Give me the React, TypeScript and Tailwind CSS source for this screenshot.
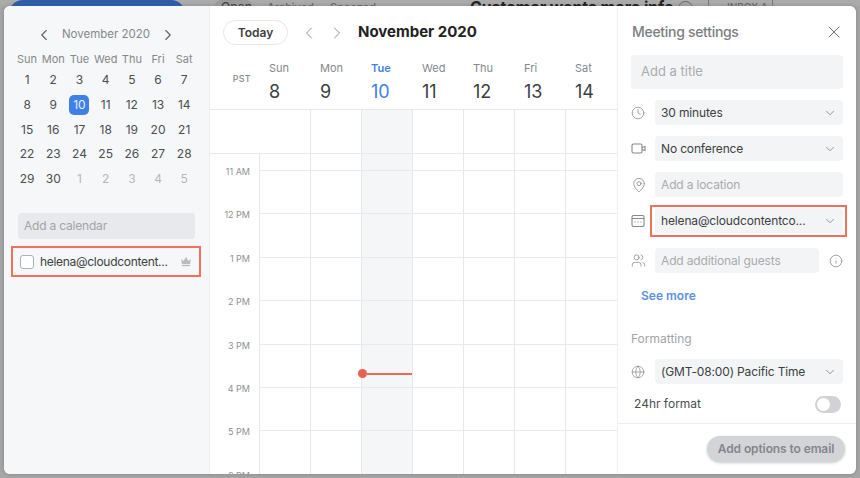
import { ChevronDown, ChevronLeft, ChevronRight, Clock, Globe, Info, MapPin, Users, X } from "lucide-react";
import type { ReactNode } from "react";

const weekDays = ["Sun", "Mon", "Tue", "Wed", "Thu", "Fri", "Sat"];

const miniDays = [
  1, 2, 3, 4, 5, 6, 7, 8, 9, 10, 11, 12, 13, 14, 15, 16, 17, 18, 19, 20, 21, 22, 23, 24, 25, 26, 27, 28, 29, 30, 1, 2, 3,
  4, 5,
];

const columns = [
  { name: "Sun", date: 8 },
  { name: "Mon", date: 9 },
  { name: "Tue", date: 10, today: true },
  { name: "Wed", date: 11 },
  { name: "Thu", date: 12 },
  { name: "Fri", date: 13 },
  { name: "Sat", date: 14 },
];

const hours = ["11 AM", "12 PM", "1 PM", "2 PM", "3 PM", "4 PM", "5 PM", "6 PM"];

function VideoIcon() {
  return (
    <svg width="15" height="15" viewBox="0 0 15 15" fill="none" stroke="#85888c" strokeWidth="1.1">
      <rect x="1" y="3" width="10" height="9" rx="1.5" />
      <path d="M11 6.5l3-1v4l-3-1" />
    </svg>
  );
}

function CalendarIcon() {
  return (
    <svg width="14" height="14" viewBox="0 0 14 14" fill="none" stroke="#85888c" strokeWidth="1.1">
      <rect x="1" y="1.5" width="12" height="11" rx="1.5" />
      <path d="M1 4.5h12" />
      <path d="M3.5 8h1M6.5 8h1M9.5 8h1" />
    </svg>
  );
}

function CrownIcon() {
  return (
    <svg className="shrink-0" width="12" height="11" viewBox="0 0 12 11" fill="#b9bbbf">
      <path d="M1 3l2.6 2L6 1l2.4 4L11 3l-1 5H2z" />
      <rect x="2" y="8.8" width="8" height="1.4" />
    </svg>
  );
}

function Field({ children, chevron, muted }: { children: ReactNode; chevron?: boolean; muted?: boolean }) {
  return (
    <div
      className={`flex h-[25px] flex-1 items-center justify-between rounded bg-[#f3f4f6] pl-[6px] pr-[6px] text-xs tracking-[-0.15px] ${
        muted ? "text-[#a9abae]" : "text-[#3c3f42]"
      }`}
    >
      <span className="whitespace-nowrap">{children}</span>
      {chevron && <ChevronDown size={14} strokeWidth={1.5} color="#85888c" />}
    </div>
  );
}

function SettingRow({ icon, children, className = "" }: { icon: ReactNode; children: ReactNode; className?: string }) {
  return (
    <div className={`flex items-center ${className}`}>
      <div className="flex w-6 justify-start">{icon}</div>
      {children}
    </div>
  );
}

function MiniCalendar() {
  return (
    <div className="pl-[10px] pt-[20px]">
      <div className="flex h-[18px] items-center pl-[21px] text-[#85888c]">
        <ChevronLeft size={18} strokeWidth={1.5} color="#5f6266" />
        <span className="w-[106px] text-center text-[11.5px]">November 2020</span>
        <ChevronRight size={18} strokeWidth={1.5} color="#5f6266" />
      </div>
      <div className="mt-[6px] grid grid-cols-[repeat(7,26.2px)] text-center text-[11px] text-[#85888c]">
        {weekDays.map((d) => (
          <div key={d} className="h-[20px] leading-[18px]">
            {d}
          </div>
        ))}
      </div>
      <div className="-mt-[2px] grid grid-cols-[repeat(7,26.2px)] grid-rows-[repeat(5,24.7px)] text-center text-xs text-[#4b4e52]">
        {miniDays.map((d, i) => (
          <div key={i} className="flex items-center justify-center">
            {i === 9 ? (
              <span className="flex h-[20px] w-[20px] items-center justify-center rounded-[5px] bg-[#3f7fe8] text-[#eaf1fd]">
                {d}
              </span>
            ) : (
              <span className={i > 29 ? "text-[#b5b7ba]" : ""}>{d}</span>
            )}
          </div>
        ))}
      </div>
    </div>
  );
}

export default function App() {
  return (
    <div
      className="h-[478px] w-[860px] overflow-hidden bg-[#a6a6a6] text-[#3c3f42]"
      style={{ fontFamily: "Inter, 'Liberation Sans', sans-serif" }}
    >
      {/* Page behind the modal, only the top edge shows */}
      <div className="flex h-[6px] overflow-hidden bg-[#ababab] text-[11px] font-medium whitespace-nowrap text-[#444]">
        <div className="ml-[9px] h-[20px] w-[176px] rounded-t-[14px] bg-[#2f5ca6]" />
        <div className="ml-[29px] h-[20px] w-[39px] rounded-t-[8px] bg-[#999] pl-[7px] text-xs leading-[14px]">Open</div>
        <div className="ml-[14px] w-[42px] leading-[14px] text-[#666]">Archived</div>
        <div className="ml-[21px] w-[42px] leading-[14px] text-[#666]">Snoozed</div>
        <div className="ml-[98px] -mt-[3px] w-[198px] text-base font-bold leading-[20px] tracking-[-0.1px] text-[#222]">
          Customer wants more info
        </div>
        <div className="ml-[10px] mt-[1px] h-[15px] w-[15px] rounded-full border border-[#666]" />
        <div className="ml-[15px] h-[20px] w-[65px] border-x border-[#777] pl-[18px] text-[10px] leading-[14px] text-[#666]">
          INBOX A
        </div>
      </div>

      <div className="ml-[4px] flex h-[468px] w-[852px] overflow-hidden rounded-md bg-white shadow-[0_0_4px_rgba(0,0,0,0.2)]">
        {/* Left sidebar */}
        <aside className="flex w-[206px] shrink-0 flex-col border-r border-[#eeeff2] bg-[#f6f7f9]">
          <MiniCalendar />
          <div className="ml-[14px] mt-[22px] flex h-[26px] w-[177px] items-center rounded bg-[#e8e9ec] pl-[6px] text-xs tracking-[-0.2px] text-[#a2a4a8]">
            Add a calendar
          </div>
          <div className="ml-[7px] mt-[7px] flex h-[31px] w-[190px] items-center border-2 border-[#f0705a] pl-[7px] pr-[7px]">
            <span className="h-[14px] w-[14px] shrink-0 rounded-[3px] border border-[#aeb0b4] bg-white" />
            <span className="ml-[6px] flex-1 whitespace-nowrap text-xs tracking-[-0.3px] text-[#3c3f42]">helena@cloudcontent...</span>
            <CrownIcon />
          </div>
        </aside>

        {/* Week view */}
        <main className="flex w-[408px] shrink-0 flex-col border-r border-[#eeeff2]">
          <div className="flex h-[39px] shrink-0 items-end pl-[13px]">
            <div className="flex h-[25px] w-[65px] items-center justify-center rounded-full border border-[#e6e7e9] text-xs font-semibold text-[#3c3f42]">
              Today
            </div>
            <div className="flex h-[25px] items-center gap-[8px] pl-[11px]">
              <ChevronLeft size={20} strokeWidth={1.2} color="#8d9094" />
              <ChevronRight size={20} strokeWidth={1.2} color="#8d9094" />
            </div>
            <div className="flex h-[25px] items-center pl-[11px] text-[15px] font-bold text-[#222]">November 2020</div>
          </div>

          <div className="flex h-[65px] shrink-0 border-b border-[#e6e7e9]">
            <div className="flex w-[49px] shrink-0 items-start justify-end pr-[8px] pt-[27px] text-[9px] font-medium tracking-[0.3px] text-[#85888c]">
              PST
            </div>
            {columns.map((c) => (
              <div
                key={c.name}
                className={`w-[51px] pl-[10px] pt-[14px] ${c.today ? "text-[#3f7fe8]" : "text-[#85888c]"}`}
              >
                <div className={`text-[11px] leading-[18px] ${c.today ? "font-semibold" : ""}`}>{c.name}</div>
                <div className={`mt-[2px] text-lg leading-[26px] ${c.today ? "" : "text-[#3c3f42]"}`}>{c.date}</div>
              </div>
            ))}
          </div>

          {/* All day row */}
          <div className="flex h-[44px] shrink-0 border-b border-[#e9eaec] pl-[49px]">
            {columns.map((c) => (
              <div
                key={c.name}
                className={`w-[51px] ${c.name === "Sun" ? "" : "border-l border-[#e6e7e9]"} ${c.today ? "bg-[#f5f6f8]" : ""}`}
              />
            ))}
          </div>

          {/* Hour grid */}
          <div className="relative flex flex-1 overflow-hidden">
            <div className="w-[49px] shrink-0 pt-[16px]">
              {hours.map((h) => (
                <div key={h} className="relative h-[43.4px] text-right">
                  <span className="absolute right-[9px] -top-[5px] text-[9px] leading-[14px] text-[#8d9094]">{h}</span>
                </div>
              ))}
            </div>
            <div className="flex flex-1 flex-col">
              <div className="flex h-[16px] shrink-0">
                {columns.map((c) => (
                  <div key={c.name} className={`w-[51px] border-l border-[#e6e7e9] ${c.today ? "bg-[#f5f6f8]" : ""}`} />
                ))}
              </div>
              {hours.map((h) => (
                <div key={h} className="flex h-[43.4px] shrink-0 border-t border-[#e9eaec]">
                  {columns.map((c) => (
                    <div key={c.name} className={`w-[51px] border-l border-[#e6e7e9] ${c.today ? "bg-[#f5f6f8]" : ""}`} />
                  ))}
                </div>
              ))}
            </div>
            {/* Current time marker */}
            <div className="absolute left-[148px] top-[215px] flex w-[54px] items-center">
              <span className="h-[9px] w-[9px] shrink-0 rounded-full bg-[#ea5f4f]" />
              <span className="h-[2px] flex-1 bg-[#ea6a5a]" />
            </div>
          </div>
        </main>

        {/* Meeting settings */}
        <section className="flex min-w-0 flex-1 flex-col">
          <div className="flex-1 pl-[13px] pr-[13px]">
            <div className="-mr-[1px] flex h-[49px] items-center justify-between pl-[1px] pt-[3px]">
              <span className="text-sm font-medium tracking-[-0.3px] text-[#7b7e82]">Meeting settings</span>
              <X size={20} strokeWidth={1.2} color="#6f7276" />
            </div>
            <div className="flex h-[34px] items-center rounded bg-[#f3f4f6] pl-[10px] text-[13px] text-[#a9abae]">
              Add a title
            </div>
            <SettingRow className="mt-[11px]" icon={<Clock size={14} strokeWidth={1.3} color="#85888c" />}>
              <Field chevron>30 minutes</Field>
            </SettingRow>
            <SettingRow className="mt-[11px]" icon={<VideoIcon />}>
              <Field chevron>No conference</Field>
            </SettingRow>
            <SettingRow className="mt-[11px]" icon={<MapPin size={16} strokeWidth={1.2} color="#85888c" />}>
              <Field muted>Add a location</Field>
            </SettingRow>
            <SettingRow className="mt-[11px]" icon={<CalendarIcon />}>
              <div className="relative flex flex-1">
                <Field chevron>helena@cloudcontentco...</Field>
                <span className="absolute -bottom-[4px] -left-[5px] -right-[4px] -top-[3px] border-2 border-[#f0705a]" />
              </div>
            </SettingRow>
            <SettingRow className="mt-[15px]" icon={<Users size={15} strokeWidth={1.2} color="#85888c" />}>
              <Field muted>Add additional guests</Field>
              <div className="flex w-[24px] justify-end">
                <Info size={14} strokeWidth={1.3} color="#85888c" />
              </div>
            </SettingRow>
            <div className="mt-[14px] pl-[10px] text-xs font-semibold leading-[18px] text-[#5b8fe9]">See more</div>
            <div className="mt-[25px] text-xs leading-[18px] text-[#a2a4a8]">Formatting</div>
            <SettingRow className="mt-[11px]" icon={<Globe size={14} strokeWidth={1.2} color="#85888c" />}>
              <Field chevron>(GMT-08:00) Pacific Time</Field>
            </SettingRow>
            <div className="mt-[11px] flex h-[18px] items-center justify-between pl-[3px] pr-[2px] text-xs text-[#4b4e52]">
              <span>24hr format</span>
              <span className="flex h-[17px] w-[26px] items-center rounded-full bg-[#d1d2d5] pl-[2px]">
                <span className="h-[13px] w-[13px] rounded-full bg-white" />
              </span>
            </div>
          </div>
          <div className="flex h-[51px] shrink-0 items-center justify-end border-t border-[#eeeff2] pr-[11px]">
            <div className="flex h-[26px] w-[138px] items-center justify-center rounded-full bg-[#d3d4d7] text-xs font-semibold tracking-[-0.1px] text-[#85868a] shadow-[0_1px_3px_rgba(0,0,0,0.2)]">
              Add options to email
            </div>
          </div>
        </section>
      </div>
    </div>
  );
}
